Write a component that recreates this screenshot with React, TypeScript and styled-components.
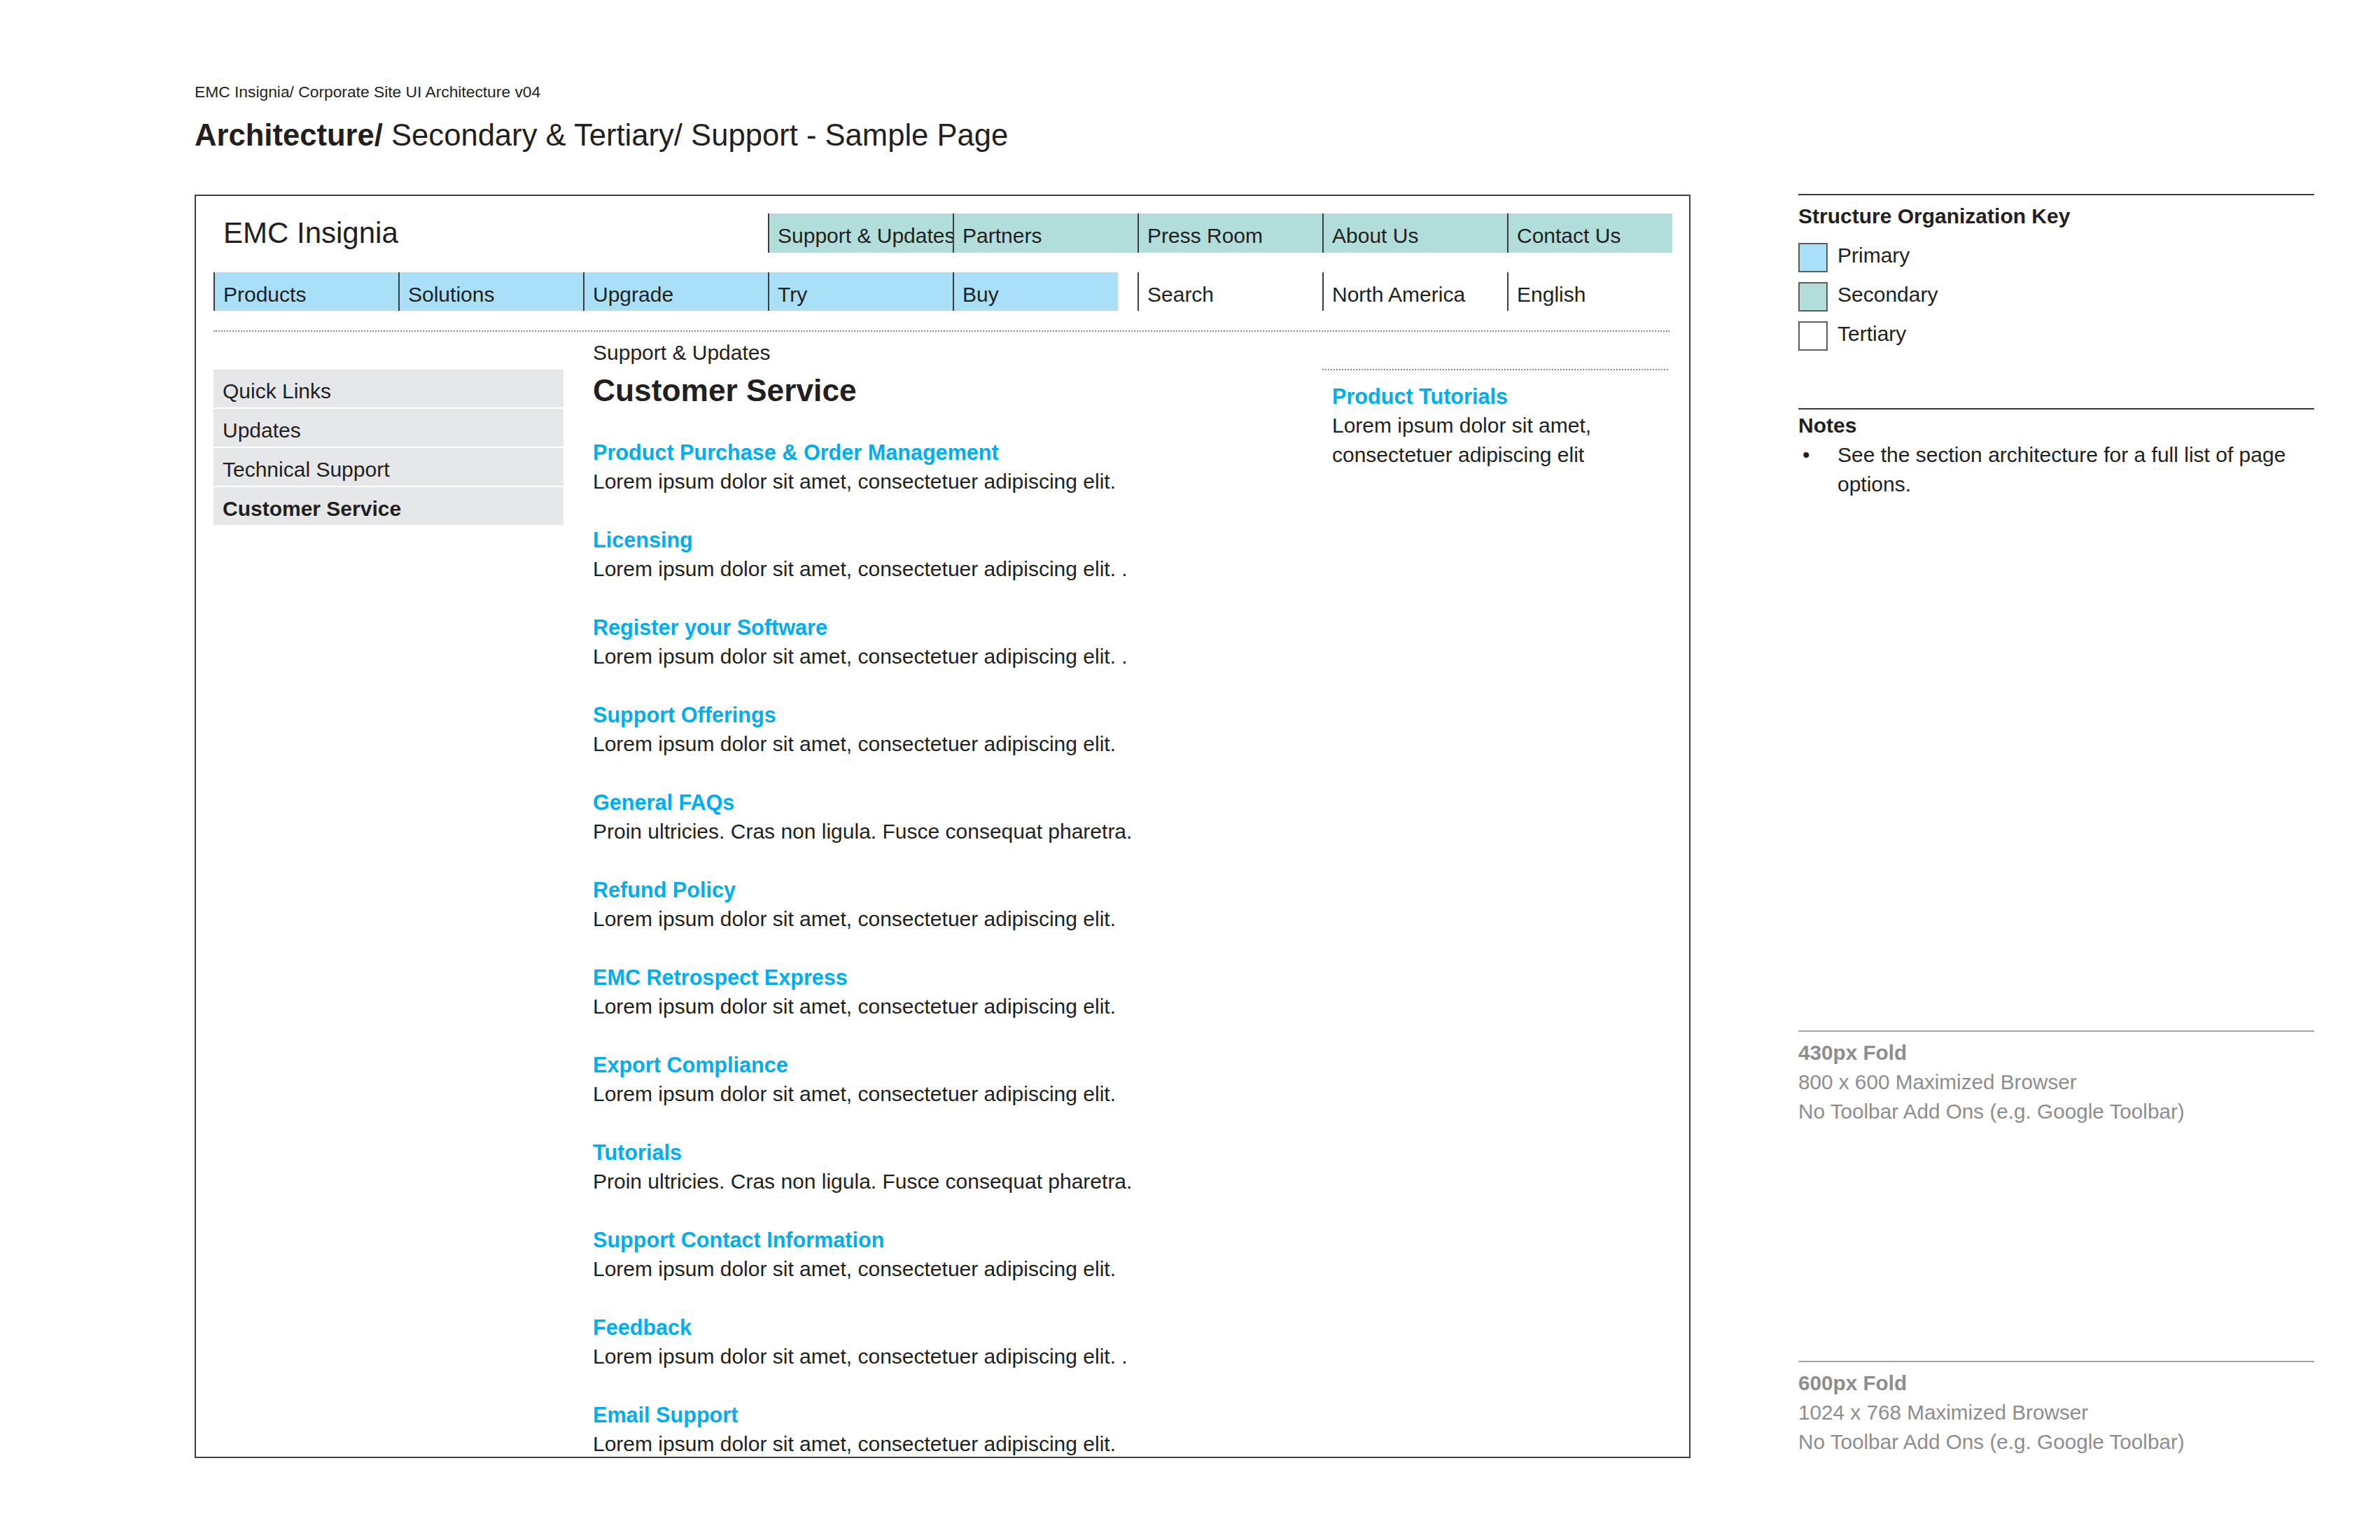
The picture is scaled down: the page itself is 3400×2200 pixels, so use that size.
import React from 'react';
import styled, { createGlobalStyle } from 'styled-components';

const GlobalStyle = createGlobalStyle`
  html, body {
    margin: 0;
    padding: 0;
    background: #ffffff;
  }
  body {
    font-family: "Liberation Sans", Arial, Helvetica, sans-serif;
    color: #231f20;
  }
`;

type Tone = 'primary' | 'secondary' | 'tertiary';

const toneColors: Record<Tone, string> = {
  primary: '#aadff8',
  secondary: '#b1dedb',
  tertiary: 'transparent',
};

const secondaryNav = ['Support & Updates', 'Partners', 'Press Room', 'About Us', 'Contact Us'];
const primaryNav = ['Products', 'Solutions', 'Upgrade', 'Try', 'Buy'];
const tertiaryNav = ['Search', 'North America', 'English'];

const sideLinks = ['Quick Links', 'Updates', 'Technical Support', 'Customer Service'];

const lorem = 'Lorem ipsum dolor sit amet, consectetuer adipiscing elit.';
const proin = 'Proin ultricies. Cras non ligula. Fusce consequat pharetra.';

const entries = [
  { title: 'Product Purchase & Order Management', text: lorem },
  { title: 'Licensing', text: `${lorem} .` },
  { title: 'Register your Software', text: `${lorem} .` },
  { title: 'Support Offerings', text: lorem },
  { title: 'General FAQs', text: proin },
  { title: 'Refund Policy', text: lorem },
  { title: 'EMC Retrospect Express', text: lorem },
  { title: 'Export Compliance', text: lorem },
  { title: 'Tutorials', text: proin },
  { title: 'Support Contact Information', text: lorem },
  { title: 'Feedback', text: `${lorem} .` },
  { title: 'Email Support', text: lorem },
];

const keys: { label: string; tone: Tone }[] = [
  { label: 'Primary', tone: 'primary' },
  { label: 'Secondary', tone: 'secondary' },
  { label: 'Tertiary', tone: 'tertiary' },
];

const folds = [
  {
    title: '430px Fold',
    lines: ['800 x 600 Maximized Browser', 'No Toolbar Add Ons (e.g. Google Toolbar)'],
    gap: 759,
  },
  {
    title: '600px Fold',
    lines: ['1024 x 768 Maximized Browser', 'No Toolbar Add Ons (e.g. Google Toolbar)'],
    gap: 335,
  },
];

export default function App() {
  return (
    <>
      <GlobalStyle />
      <Page>
        <Sheet>
          <DocMeta>EMC Insignia/ Corporate Site UI Architecture v04</DocMeta>
          <DocTitle>
            <strong>Architecture/</strong> Secondary &amp; Tertiary/ Support - Sample Page
          </DocTitle>

          <Frame>
            <NavGrid>
              <Logo>EMC Insignia</Logo>
              {secondaryNav.map((item) => (
                <NavCell key={item} $tone="secondary">
                  {item}
                </NavCell>
              ))}
              {primaryNav.map((item, i) => (
                <NavCell key={item} $tone="primary" $narrow={i === primaryNav.length - 1}>
                  {item}
                </NavCell>
              ))}
              {tertiaryNav.map((item) => (
                <NavCell key={item} $tone="tertiary">
                  {item}
                </NavCell>
              ))}
            </NavGrid>

            <Divider />

            <Body>
              <SideNav>
                {sideLinks.map((link) => (
                  <SideItem key={link} $active={link === 'Customer Service'}>
                    {link}
                  </SideItem>
                ))}
              </SideNav>

              <Main>
                <Breadcrumb>Support &amp; Updates</Breadcrumb>
                <PageTitle>Customer Service</PageTitle>
                <EntryList>
                  {entries.map((entry) => (
                    <Entry key={entry.title}>
                      <EntryTitle>{entry.title}</EntryTitle>
                      <EntryText>{entry.text}</EntryText>
                    </Entry>
                  ))}
                </EntryList>
              </Main>

              <Aside>
                <EntryTitle>Product Tutorials</EntryTitle>
                <EntryText>
                  Lorem ipsum dolor sit amet,
                  <br />
                  consectetuer adipiscing elit
                </EntryText>
              </Aside>
            </Body>
          </Frame>
        </Sheet>

        <Legend>
          <KeySection>
            <SectionTitle>Structure Organization Key</SectionTitle>
            <KeyList>
              {keys.map((k) => (
                <KeyRow key={k.label}>
                  <Swatch $tone={k.tone} />
                  <KeyLabel>{k.label}</KeyLabel>
                </KeyRow>
              ))}
            </KeyList>
          </KeySection>

          <NotesSection>
            <NotesTitle>Notes</NotesTitle>
            <NoteItem>
              <Bullet>•</Bullet>
              <NoteText>See the section architecture for a full list of page options.</NoteText>
            </NoteItem>
          </NotesSection>

          {folds.map((fold) => (
            <Fold key={fold.title} $gap={fold.gap}>
              <FoldTitle>{fold.title}</FoldTitle>
              {fold.lines.map((line) => (
                <FoldLine key={line}>{line}</FoldLine>
              ))}
            </Fold>
          ))}
        </Legend>
      </Page>
    </>
  );
}

const Page = styled.div`
  width: 3400px;
  height: 2200px;
  box-sizing: border-box;
  display: flex;
  align-items: flex-start;
  gap: 154px;
  padding: 118px 0 0 278px;
  overflow: hidden;
`;

const Sheet = styled.div`
  width: 2137px;
  flex-shrink: 0;
`;

const DocMeta = styled.div`
  font-size: 22.8px;
  line-height: 26px;
`;

const DocTitle = styled.h1`
  margin: 23px 0 0;
  font-size: 43.6px;
  line-height: 52px;
  font-weight: normal;

  strong {
    font-weight: bold;
  }
`;

const Frame = styled.div`
  margin-top: 59px;
  width: 2137px;
  height: 1805px;
  box-sizing: border-box;
  border: 2px solid #3d3d3d;
  overflow: hidden;
`;

const NavGrid = styled.div`
  display: grid;
  grid-template-columns: repeat(7, 264px) 236px;
  grid-template-rows: 56px 55px;
  row-gap: 28px;
  padding: 25px 0 0 25px;
`;

const Logo = styled.div`
  grid-column: 1 / span 3;
  padding-left: 14px;
  font-size: 42px;
  line-height: 56px;
  white-space: nowrap;
`;

const NavCell = styled.div<{ $tone: Tone; $narrow?: boolean }>`
  box-sizing: border-box;
  width: ${(p) => (p.$narrow ? '236px' : 'auto')};
  background: ${(p) => toneColors[p.$tone]};
  border-left: 2px solid #3c3c3c;
  padding: 7px 0 0 12px;
  font-size: 30px;
  line-height: 49px;
  white-space: nowrap;
`;

const Divider = styled.div`
  margin: 28px 0 0 25px;
  width: 2080px;
  border-top: 2px dotted #8b8b8b;
`;

const Body = styled.div`
  display: grid;
  grid-template-columns: 500px 1084px 494px;
  margin-left: 25px;
  align-items: start;
`;

const SideNav = styled.div`
  margin-top: 54px;
  display: flex;
  flex-direction: column;
  gap: 2px;
`;

const SideItem = styled.div<{ $active?: boolean }>`
  height: 54px;
  box-sizing: border-box;
  background: #e6e7e8;
  padding: 8px 0 0 13px;
  font-size: 30px;
  line-height: 46px;
  font-weight: ${(p) => (p.$active ? 'bold' : 'normal')};
`;

const Main = styled.div`
  padding-left: 42px;
`;

const Breadcrumb = styled.div`
  margin-top: 12px;
  font-size: 30px;
  line-height: 36px;
`;

const PageTitle = styled.h2`
  margin: 10px 0 0;
  font-size: 44.3px;
  line-height: 52px;
  font-weight: bold;
`;

const EntryList = styled.div`
  margin-top: 41px;
  display: flex;
  flex-direction: column;
  gap: 41px;
`;

const Entry = styled.div`
  display: flex;
  flex-direction: column;
`;

const EntryTitle = styled.div`
  color: #00aeef;
  font-weight: bold;
  font-size: 30.6px;
  line-height: 42px;
  white-space: nowrap;
`;

const EntryText = styled.div`
  font-size: 30px;
  line-height: 42px;
  white-space: nowrap;
`;

const Aside = styled.div`
  margin-top: 53px;
  border-top: 2px dotted #8b8b8b;
  padding: 16px 0 0 14px;
`;

const Legend = styled.div`
  width: 737px;
  flex-shrink: 0;
  padding-top: 159px;
  display: flex;
  flex-direction: column;
`;

const KeySection = styled.div`
  border-top: 2px solid #3a3a3a;
`;

const SectionTitle = styled.div`
  margin-top: 9px;
  font-size: 30px;
  line-height: 42px;
  font-weight: bold;
`;

const KeyList = styled.div`
  margin-top: 17px;
  display: flex;
  flex-direction: column;
  gap: 14px;
`;

const KeyRow = styled.div`
  display: flex;
  align-items: center;
  gap: 14px;
  height: 42px;
`;

const Swatch = styled.div<{ $tone: Tone }>`
  width: 42px;
  height: 42px;
  box-sizing: border-box;
  border: 2px solid #5c5d5f;
  background: ${(p) => (p.$tone === 'tertiary' ? '#ffffff' : toneColors[p.$tone])};
`;

const KeyLabel = styled.span`
  font-size: 30px;
  line-height: 42px;
  margin-top: -6px;
`;

const NotesSection = styled.div`
  margin-top: 82px;
  border-top: 2px solid #3a3a3a;
`;

const NotesTitle = styled(SectionTitle)`
  margin-top: 2px;
`;

const NoteItem = styled.div`
  display: flex;
  font-size: 30px;
  line-height: 42px;
`;

const Bullet = styled.span`
  width: 56px;
  flex-shrink: 0;
  box-sizing: border-box;
  padding-left: 6px;
`;

const NoteText = styled.span`
  flex: 1;
`;

const Fold = styled.div<{ $gap: number }>`
  margin-top: ${(p) => p.$gap}px;
  border-top: 2px solid #a3a3a3;
  padding-top: 9px;
  color: #8d8d8f;
  font-size: 29.7px;
  line-height: 42px;
`;

const FoldTitle = styled.div`
  font-weight: bold;
`;

const FoldLine = styled.div`
  white-space: nowrap;
`;
